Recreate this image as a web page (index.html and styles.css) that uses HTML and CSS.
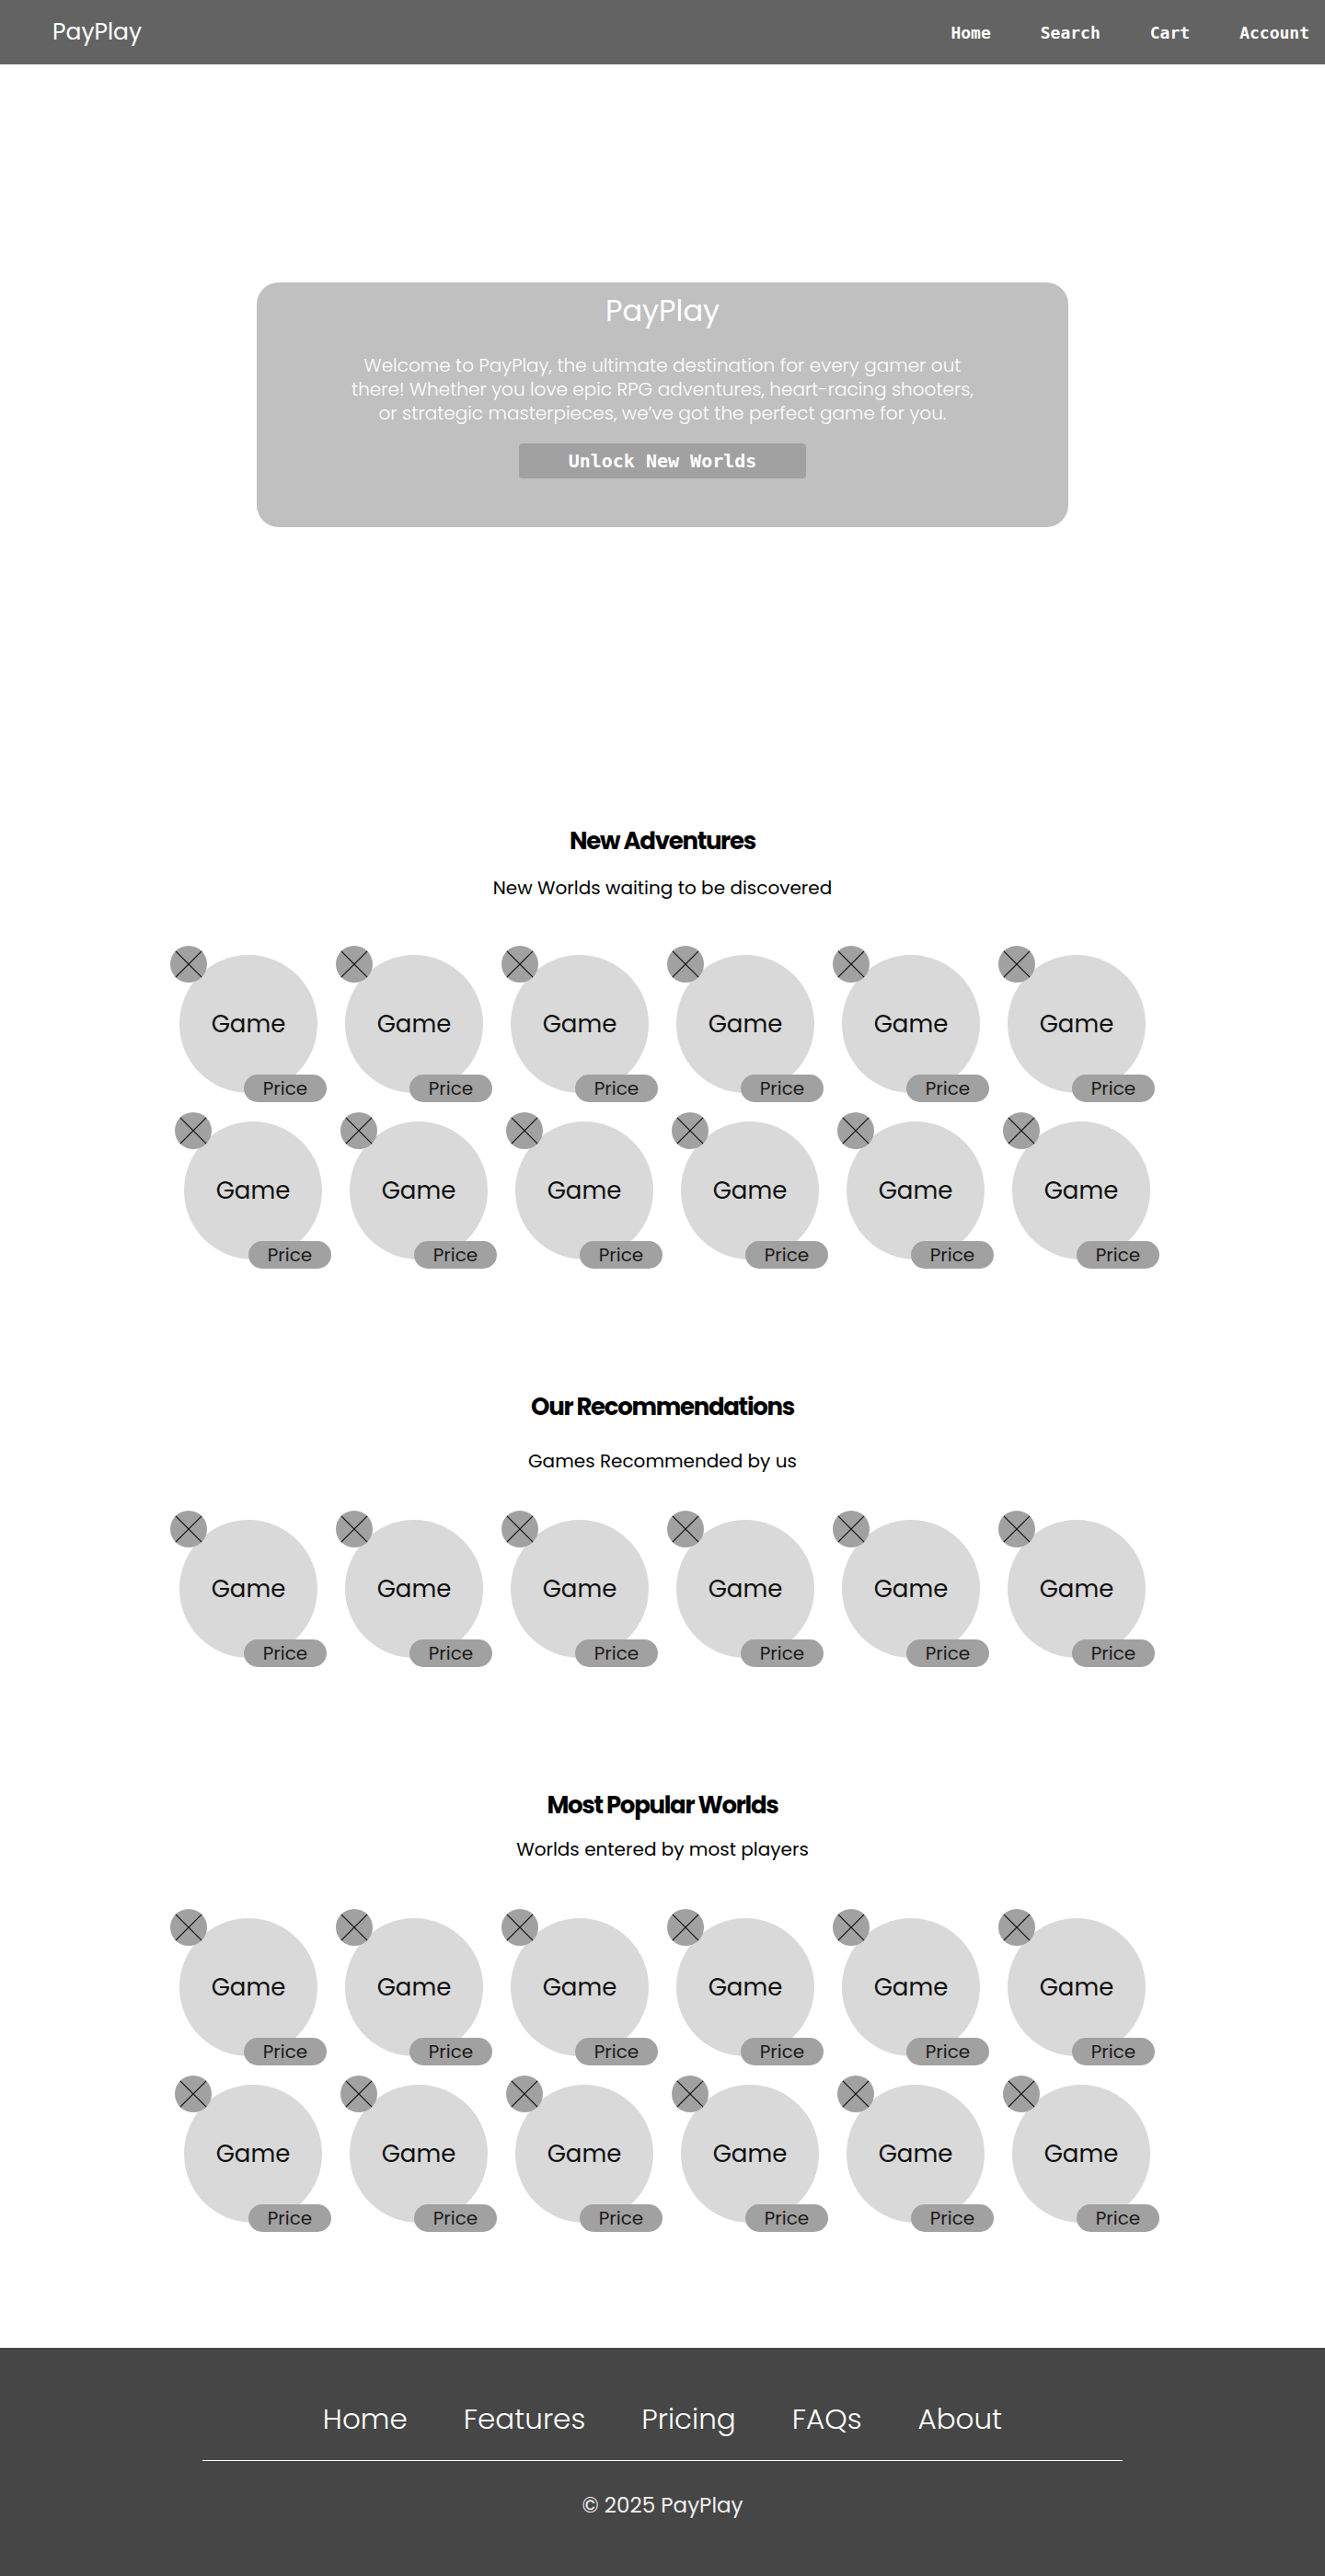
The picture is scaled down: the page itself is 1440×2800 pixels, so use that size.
FILE: index.html
```html
<!DOCTYPE html>
<html lang="en">
<head>
  <meta charset="UTF-8" />
  <meta name="viewport" content="width=device-width, initial-scale=1.0"/>
  <title>PayPlay</title>
  <link rel="stylesheet" href="styles.css">
</head>
<body>
  <header class="topbar">
    <a class="logo" href="#">PayPlay</a>
    <nav class="topnav">
      <a href="#">Home</a>
      <a href="#">Search</a>
      <a href="#">Cart</a>
      <a href="#">Account</a>
    </nav>
  </header>

  <section class="hero">
    <div class="hero-box">
      <h1>PayPlay</h1>
      <p>Welcome to PayPlay, the ultimate destination for every gamer out there! Whether you love epic RPG adventures, heart-racing shooters, or strategic masterpieces, we’ve got the perfect game for you.</p>
      <button class="hero-btn">Unlock New Worlds</button>
    </div>
  </section>

  <section class="games first">
    <div class="games-head">
      <h2>New Adventures</h2>
      <p class="sub-a">New Worlds waiting to be discovered</p>
    </div>
    <div class="row" data-count="6"></div>
    <div class="row shifted" data-count="6"></div>
  </section>

  <section class="games">
    <div class="games-head">
      <h2>Our Recommendations</h2>
      <p class="sub-b">Games Recommended by us</p>
    </div>
    <div class="row" data-count="6"></div>
  </section>

  <section class="games">
    <div class="games-head">
      <h2>Most Popular Worlds</h2>
      <p class="sub-c">Worlds entered by most players</p>
    </div>
    <div class="row" data-count="6"></div>
    <div class="row shifted" data-count="6"></div>
  </section>

  <footer class="site-footer">
    <nav class="footnav">
      <a href="#">Home</a>
      <a href="#">Features</a>
      <a href="#">Pricing</a>
      <a href="#">FAQs</a>
      <a href="#">About</a>
    </nav>
    <hr>
    <p class="copy">© 2025 PayPlay</p>
  </footer>

  <script>
    // fill every row with placeholder game cards
    const cardHtml = `
      <div class="game">
        <span class="badge">
          <svg viewBox="0 0 40 40" width="40" height="40">
            <line x1="5.9" y1="5.9" x2="34.1" y2="34.1" />
            <line x1="34.1" y1="5.9" x2="5.9" y2="34.1" />
          </svg>
        </span>
        <span class="name">Game</span>
        <span class="price">Price</span>
      </div>`;

    document.querySelectorAll(".row").forEach(row => {
      const n = parseInt(row.dataset.count, 10);
      for (let i = 0; i < n; i++) {
        row.insertAdjacentHTML("beforeend", `<div class="cell">${cardHtml}</div>`);
      }
    });
  </script>
</body>
</html>
```

FILE: styles.css
```css
:root {
  --header: #636363;
  --footer: #464646;
  --hero: #c0c0c0;
  --dark-chip: #a1a1a1;
  --circle: #d9d9d9;
}
* { box-sizing: border-box; }
body {
  margin: 0;
  font-family: "Poppins", "Inter", sans-serif;
  color: #000;
  background: #fff;
}
a { color: inherit; text-decoration: none; }

/* header */
.topbar {
  height: 70px;
  background: var(--header);
  display: flex;
  justify-content: space-between;
  align-items: center;
  padding: 0 17px 0 57px;
}
.logo {
  color: #fff;
  font-size: 25px;
}
.topnav {
  display: flex;
  gap: 54px;
  font-family: "DejaVu Sans Mono", "Liberation Mono", monospace;
  font-weight: bold;
  font-size: 18px;
  color: #fff;
}

/* hero */
.hero {
  height: 740px;
  display: flex;
  justify-content: center;
  align-items: center;
}
.hero-box {
  width: 882px;
  height: 266px;
  background: var(--hero);
  border-radius: 24px;
  padding-top: 10px;
  display: flex;
  flex-direction: column;
  align-items: center;
  color: #fff;
  text-align: center;
}
.hero-box h1 {
  margin: 0;
  font-size: 32px;
  font-weight: 400;
  line-height: 42px;
}
.hero-box p {
  margin: 25px 0 0;
  max-width: 690px;
  font-size: 20px;
  line-height: 26px;
  font-weight: 300;
}
.hero-btn {
  margin-top: 20px;
  width: 312px;
  height: 38px;
  border: none;
  border-radius: 4px;
  background: var(--dark-chip);
  color: #fff;
  font-family: "DejaVu Sans Mono", "Liberation Mono", monospace;
  font-weight: bold;
  font-size: 20px;
  cursor: pointer;
}

/* game sections */
.games { padding-top: 126px; }
.games.first { padding-top: 85px; }
.games-head {
  height: 127px;
  text-align: center;
}
.games.first .games-head { height: 128px; }
.games-head h2 {
  margin: 0;
  font-size: 26px;
  font-weight: 700;
  letter-spacing: -1.3px;
  line-height: 39px;
}
.games-head p {
  margin: 16px 0 0;
  font-size: 20px;
  line-height: 30px;
}
.games-head .sub-b { margin-top: 24px; }
.games-head .sub-c { margin-top: 13px; }

.row {
  display: flex;
  justify-content: center;
}
.row + .row { margin-top: 1px; }
.row.shifted { padding-left: 10px; }
.cell {
  width: 180px;
  height: 180px;
  padding: 15px;
}
.game {
  position: relative;
  width: 150px;
  height: 150px;
  border-radius: 50%;
  background: var(--circle);
  display: flex;
  justify-content: center;
  align-items: center;
}
.game .name {
  font-size: 26px;
  color: #111;
}
.badge {
  position: absolute;
  top: -10px;
  left: -10px;
  width: 40px;
  height: 40px;
  border-radius: 50%;
  background: var(--dark-chip);
}
.badge svg { display: block; }
.badge line { stroke: #111; stroke-width: 1.2; }
.price {
  position: absolute;
  left: 70px;
  top: 130px;
  width: 90px;
  height: 30px;
  border-radius: 15px;
  background: var(--dark-chip);
  display: flex;
  justify-content: center;
  align-items: center;
  font-size: 20px;
  color: #1a1a1a;
}

/* footer */
.site-footer {
  margin-top: 121px;
  height: 250px;
  background: var(--footer);
  color: #fff;
  padding-top: 55px;
  text-align: center;
}
.footnav {
  display: flex;
  justify-content: center;
  gap: 61px;
  font-size: 31px;
  font-weight: 300;
  line-height: 45px;
}
.site-footer hr {
  width: 1000px;
  margin: 22px auto 0;
  border: none;
  border-top: 1px solid #fff;
}
.copy {
  margin: 32px 0 0;
  font-size: 23px;
  line-height: 33px;
  color: #f0f0f0;
}
```
